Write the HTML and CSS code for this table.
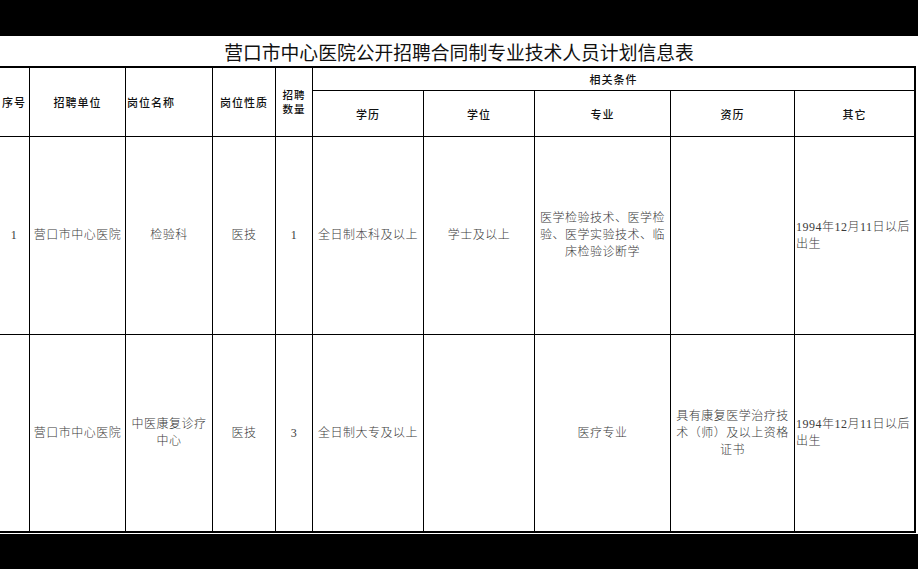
FILE: index.html
```html
<!DOCTYPE html>
<html lang="zh-CN">
<head>
<meta charset="utf-8">
<title>营口市中心医院公开招聘合同制专业技术人员计划信息表</title>
<link rel="stylesheet" href="styles.css">
</head>
<body>
<div class="sheet">
  <div class="title">营口市中心医院公开招聘合同制专业技术人员计划信息表</div>
  <div class="grid">
    <div class="cell head span2">序号</div>
    <div class="cell head span2">招聘单位</div>
    <div class="cell head span2 left">岗位名称</div>
    <div class="cell head span2">岗位性质</div>
    <div class="cell head span2 tight">招聘<br>数量</div>
    <div class="cell head group">相关条件</div>
    <div class="cell head">学历</div>
    <div class="cell head">学位</div>
    <div class="cell head">专业</div>
    <div class="cell head">资历</div>
    <div class="cell head">其它</div>

    <div class="cell">1</div>
    <div class="cell">营口市中心医院</div>
    <div class="cell">检验科</div>
    <div class="cell">医技</div>
    <div class="cell">1</div>
    <div class="cell">全日制本科及以上</div>
    <div class="cell">学士及以上</div>
    <div class="cell">医学检验技术、医学检验、医学实验技术、临床检验诊断学</div>
    <div class="cell"></div>
    <div class="cell left">1994年12月11日以后出生</div>

    <div class="cell"></div>
    <div class="cell">营口市中心医院</div>
    <div class="cell">中医康复诊疗中心</div>
    <div class="cell">医技</div>
    <div class="cell">3</div>
    <div class="cell">全日制大专及以上</div>
    <div class="cell"></div>
    <div class="cell">医疗专业</div>
    <div class="cell">具有康复医学治疗技术（师）及以上资格证书</div>
    <div class="cell left">1994年12月11日以后出生</div>
  </div>
</div>
</body>
</html>
```

FILE: styles.css
```css
html, body {
  margin: 0;
  padding: 0;
  background: #000;
  overflow: hidden;
}

body {
  width: 918px;
  height: 569px;
}

.sheet {
  margin-top: 36px;
  height: 498px;
  background: #fff;
  overflow: hidden;
}

.title {
  height: 30px;
  box-sizing: border-box;
  padding-top: 2px;
  line-height: 28px;
  text-align: center;
  font-family: "Noto Sans CJK SC", sans-serif;
  font-size: 18.8px;
  color: #111;
}

.grid {
  display: grid;
  grid-template-columns: 30px 95px 86px 62px 36px 110px 110px 135px 123px 119px;
  grid-template-rows: 22px 45px 197px 196px;
  gap: 1px;
  background: #000;
  border: 2px solid #000;
  margin-left: -3px;
  width: max-content;
}

.cell {
  background: #fff;
  display: flex;
  align-items: center;
  justify-content: center;
  text-align: center;
  padding: 0 1px;
  font-family: "Liberation Serif", "Noto Sans CJK SC", serif;
  font-size: 12px;
  letter-spacing: 0.5px;
  line-height: 17px;
  color: #3a3a3a;
  font-weight: 300;
  overflow: hidden;
}

.cell.left {
  justify-content: flex-start;
  text-align: left;
  padding-left: 1px;
}

.head {
  font-family: "Noto Sans CJK SC", sans-serif;
  font-size: 11px;
  letter-spacing: 1px;
  color: #111;
  font-weight: 500;
  line-height: 14px;
}

.span2 {
  grid-row: span 2;
}

.group {
  grid-column: span 5;
}

.tight {
  font-size: 10.5px;
  line-height: 14px;
}
```
